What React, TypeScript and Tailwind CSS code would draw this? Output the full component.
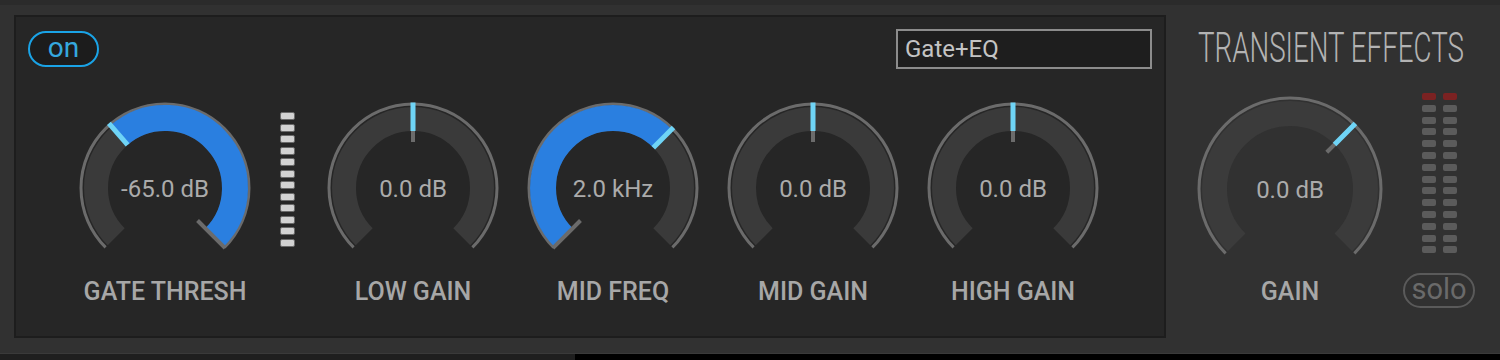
import React from "react";

const BLUE = "#2a7fe0";
const CYAN = "#6fd4f6";
const RING = "#6b6b6b";

type Geo = { ring: number; tIn: number; tOut: number; tick: number };
const SMALL: Geo = { ring: 84, tIn: 57, tOut: 81, tick: 46 };
const BIG: Geo = { ring: 91, tIn: 63, tOut: 88, tick: 52 };

// angles in degrees, clockwise from 12 o'clock
const pt = (cx: number, cy: number, r: number, deg: number) => {
  const a = (deg * Math.PI) / 180;
  return [cx + r * Math.sin(a), cy - r * Math.cos(a)];
};

const arc = (cx: number, cy: number, r: number, a: number, b: number) => {
  const [x1, y1] = pt(cx, cy, r, a);
  const [x2, y2] = pt(cx, cy, r, b);
  const large = b - a > 180 ? 1 : 0;
  return `M ${x1} ${y1} A ${r} ${r} 0 ${large} 1 ${x2} ${y2}`;
};

const radial = (cx: number, cy: number, r1: number, r2: number, deg: number) => {
  const [x1, y1] = pt(cx, cy, r1, deg);
  const [x2, y2] = pt(cx, cy, r2, deg);
  return `M ${x1} ${y1} L ${x2} ${y2}`;
};

const Knob = ({
  value,
  angle,
  origin,
  geo = SMALL,
  height = 156,
  cy = 86,
  track = "#3a3a3a",
}: {
  value: string;
  angle: number;
  origin: number;
  geo?: Geo;
  height?: number;
  cy?: number;
  track?: string;
}) => {
  const cx = 100;
  const mid = (geo.tIn + geo.tOut) / 2;
  const w = geo.tOut - geo.tIn;
  const lo = Math.min(angle, origin);
  const hi = Math.max(angle, origin);
  return (
    <svg width={200} height={height} viewBox={`0 0 200 ${height}`}>
      <path d={arc(cx, cy, geo.ring, -135, 135)} stroke={RING} strokeWidth={3} fill="none" />
      <path d={arc(cx, cy, mid, -135, 135)} stroke={track} strokeWidth={w} fill="none" />
      {hi > lo && <path d={arc(cx, cy, mid + 1, lo, hi)} stroke={BLUE} strokeWidth={w + 2} fill="none" />}
      <path d={radial(cx, cy, geo.tick, geo.ring + 1, origin)} stroke={RING} strokeWidth={4} />
      <path d={radial(cx, cy, geo.tIn, geo.ring + 1.5, angle)} stroke={CYAN} strokeWidth={5} />
      <text
        x={cx}
        y={cy + 1}
        textAnchor="middle"
        dominantBaseline="central"
        fontSize={24}
        fill="#ababab"
        fontFamily="Roboto, 'Liberation Sans', sans-serif"
      >
        {value}
      </text>
    </svg>
  );
};

const Label = ({ children }: { children: React.ReactNode }) => (
  <div className="mt-[20px] text-[25px] leading-[28px] font-medium text-[#a7a7a7] [font-family:Roboto,'Liberation_Sans',sans-serif]">
    {children}
  </div>
);

const KnobCol = (props: { label: string; value: string; angle: number; origin: number }) => (
  <div className="flex w-[200px] flex-col items-center">
    <Knob value={props.value} angle={props.angle} origin={props.origin} />
    <Label>{props.label}</Label>
  </div>
);

const GateMeter = () => (
  <div className="ml-[15px] mt-[10px] flex flex-col gap-[3.5px]">
    {Array.from({ length: 12 }).map((_, i) => (
      <div key={i} className="h-[8px] w-[15px] rounded-[2px] border border-[#6a6a6a] bg-[#d2d2d2]" />
    ))}
  </div>
);

const OutMeter = () => (
  <div className="flex flex-col gap-[4.8px]">
    {Array.from({ length: 14 }).map((_, i) => (
      <div
        key={i}
        className={i === 0 ? "h-[7px] w-[14px] rounded-[2px] bg-[#7b2222]" : "h-[7px] w-[14px] rounded-[2px] bg-[#5b5b5b]"}
      />
    ))}
  </div>
);

export default function App() {
  return (
    <div className="flex h-[360px] w-[1500px] flex-col overflow-hidden bg-[#313131] [font-family:Roboto,'Liberation_Sans',sans-serif]">
      <div className="flex h-[353px] border-t-[5px] border-[#2b2b2b]">
        <div className="pl-[14px] pt-[10px]">
          <div className="h-[323px] w-[1152px] border-2 border-[#1d1d1d] bg-[#262626]">
            <div className="flex items-start justify-between px-[12px] pt-[12px]">
              <div className="mt-[2px] flex h-[36px] w-[71px] items-center justify-center rounded-full border-2 border-[#1aa3e6] bg-[#1c1c1c] pb-[3px] text-[28px] leading-none text-[#35a8df]">
                on
              </div>
              <div className="flex h-[40px] w-[256px] items-center border-2 border-[#8c8c8c] bg-[#1e1e1e] pl-[7px] text-[24px] font-normal text-[#c4c4c4]">
                Gate+EQ
              </div>
            </div>
            <div className="mt-[33px] flex items-start pl-[49px]">
              <KnobCol label="GATE THRESH" value="-65.0 dB" angle={-41} origin={135} />
              <GateMeter />
              <div className="ml-[18px] flex">
                <KnobCol label="LOW GAIN" value="0.0 dB" angle={0} origin={0} />
                <KnobCol label="MID FREQ" value="2.0 kHz" angle={45} origin={-135} />
                <KnobCol label="MID GAIN" value="0.0 dB" angle={0} origin={0} />
                <KnobCol label="HIGH GAIN" value="0.0 dB" angle={0} origin={0} />
              </div>
            </div>
          </div>
        </div>
        <div className="flex flex-1 flex-col pt-[22px]">
          <div className="ml-[32px] origin-left scale-x-[0.66] whitespace-nowrap text-[42px] font-light leading-none text-[#b3b3b3]">
            TRANSIENT EFFECTS
          </div>
          <div className="mt-[25px] flex items-start pl-[24px]">
            <div className="flex w-[200px] flex-col items-center">
              <Knob value="0.0 dB" angle={45} origin={45} geo={BIG} height={165} cy={95} track="#3b3b3b" />
              <div className="mt-[19px] text-[25px] leading-[28px] font-medium text-[#a7a7a7]">GAIN</div>
            </div>
            <div className="ml-[13px] mt-[-1px] flex w-[72px] flex-col items-center">
              <div className="flex gap-[7px]">
                <OutMeter />
                <OutMeter />
              </div>
              <div className="mt-[20px] flex h-[35px] w-[72px] items-center justify-center rounded-full border-2 border-[#5a5a5a] pb-[3px] text-[29px] leading-none text-[#6a6a6a]">
                solo
              </div>
            </div>
          </div>
        </div>
      </div>
      <div className="flex h-[7px] border-t border-[#3a3a3a]">
        <div className="w-[575px] bg-[#1f1f1f]" />
        <div className="flex-1 bg-black" />
      </div>
    </div>
  );
}
